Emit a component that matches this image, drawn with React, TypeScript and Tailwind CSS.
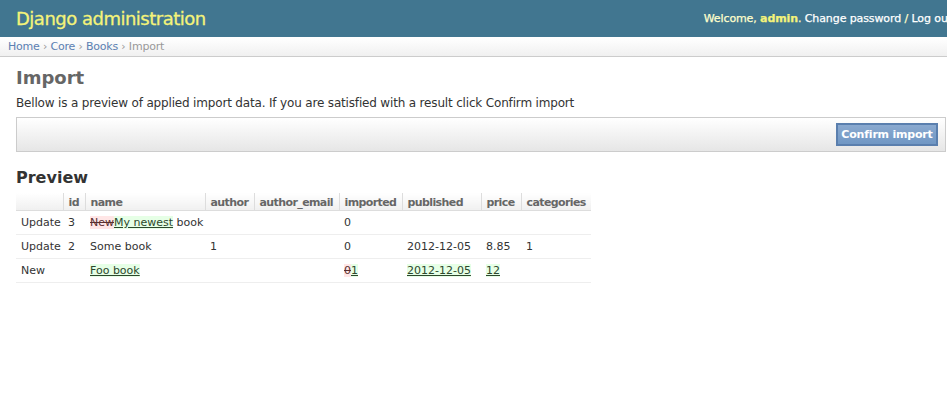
import React from "react";

const Del = ({ children }: { children: React.ReactNode }) => (
  <del className="bg-[#ffe6e6] text-[#5a2e2e] line-through">{children}</del>
);
const Ins = ({ children }: { children: React.ReactNode }) => (
  <ins className="bg-[#e6ffe6] text-[#2c472c] underline">{children}</ins>
);

const cols = [
  { label: "", w: "w-[47px]" },
  { label: "id", w: "w-[22px]" },
  { label: "name", w: "w-[120px]" },
  { label: "author", w: "w-[49px]" },
  { label: "author_email", w: "w-[85px]" },
  { label: "imported", w: "w-[63px]" },
  { label: "published", w: "w-[79px]" },
  { label: "price", w: "w-[40px]" },
  { label: "categories", w: "w-[70px]" },
];

const rows: React.ReactNode[][] = [
  ["Update", "3", <><Del>New</Del><Ins>My newest</Ins> book</>, "", "", "0", "", "", ""],
  ["Update", "2", "Some book", "1", "", "0", "2012-12-05", "8.85", "1"],
  ["New", "", <Ins>Foo book</Ins>, "", "", <><Del>0</Del><Ins>1</Ins></>, <Ins>2012-12-05</Ins>, <Ins>12</Ins>, ""],
];

export default function App() {
  return (
    <div className="w-[947px] h-[418px] overflow-hidden bg-white font-['Lucida_Grande','DejaVu_Sans',sans-serif] text-[#333]">
      <div className="w-[962px]">
        <div className="h-[37px] bg-[#417690] flex items-center justify-between pl-[16px] pr-[10px]">
          <h1 className="text-[18px] leading-[22px] text-[#f4f379] tracking-[-0.5px] [-webkit-text-stroke:0.3px_#f4f379]">
            Django administration
          </h1>
          <div className="text-[11px] text-[#ffffcc] whitespace-nowrap pt-[2px] tracking-[-0.1px] [-webkit-text-stroke:0.25px_currentColor]">
            Welcome, <strong className="text-[#f4f379] font-bold">admin</strong>.{" "}
            <span className="text-white">Change password</span> / <span className="text-white">Log out</span>
          </div>
        </div>
        <div className="border-t border-white border-b border-b-[#ccc] bg-gradient-to-b from-white to-[#f0f0f0] pt-[2px] pb-[3px] px-[8px] text-[11px] leading-[13px] text-[#999] tracking-[-0.2px]">
          <span className="text-[#5b80b2]">Home</span> › <span className="text-[#5b80b2]">Core</span> ›{" "}
          <span className="text-[#5b80b2]">Books</span> › Import
        </div>
        <div className="px-[16px]">
          <h1 className="mt-[10px] text-[18px] leading-[22px] font-bold text-[#666]">Import</h1>
          <p className="mt-[7px] text-[12px] leading-[15px] text-[#333] tracking-[-0.17px]">
            Bellow is a preview of applied import data. If you are satisfied with a result click Confirm import
          </p>
          <div className="mt-[6px] h-[35px] border border-[#ccc] bg-gradient-to-b from-white to-[#e6e6e6] px-[7px] flex items-center justify-end">
            <button className="h-[23px] w-[102px] border-2 border-[#5a7fae] bg-gradient-to-b from-[#8aa9cf] to-[#7097c4] text-white font-bold text-[11px] leading-[13px] tracking-[-0.2px]">
              Confirm import
            </button>
          </div>
          <h2 className="mt-[16px] text-[16px] leading-[20px] font-bold text-[#333]">Preview</h2>
          <table className="mt-[5px] table-fixed border-collapse w-[575px] text-[11px] leading-[13px]">
            <thead>
              <tr>
                {cols.map((c, i) => (
                  <th
                    key={i}
                    className={`${c.w} text-left font-bold text-[#666] px-[5px] pt-[3px] pb-[1px] border-b border-[#ddd] bg-gradient-to-b from-white to-[#f0f0f0] whitespace-nowrap tracking-[-0.6px] ${i === 0 ? "" : "border-l border-l-[#ddd]"}`}
                  >
                    {c.label}
                  </th>
                ))}
              </tr>
            </thead>
            <tbody>
              {rows.map((r, ri) => (
                <tr key={ri}>
                  {r.map((cell, ci) => (
                    <td key={ci} className="px-[5px] py-[5px] border-b border-[#eee] text-[#333] whitespace-nowrap align-top">
                      {cell}
                    </td>
                  ))}
                </tr>
              ))}
            </tbody>
          </table>
        </div>
      </div>
    </div>
  );
}
